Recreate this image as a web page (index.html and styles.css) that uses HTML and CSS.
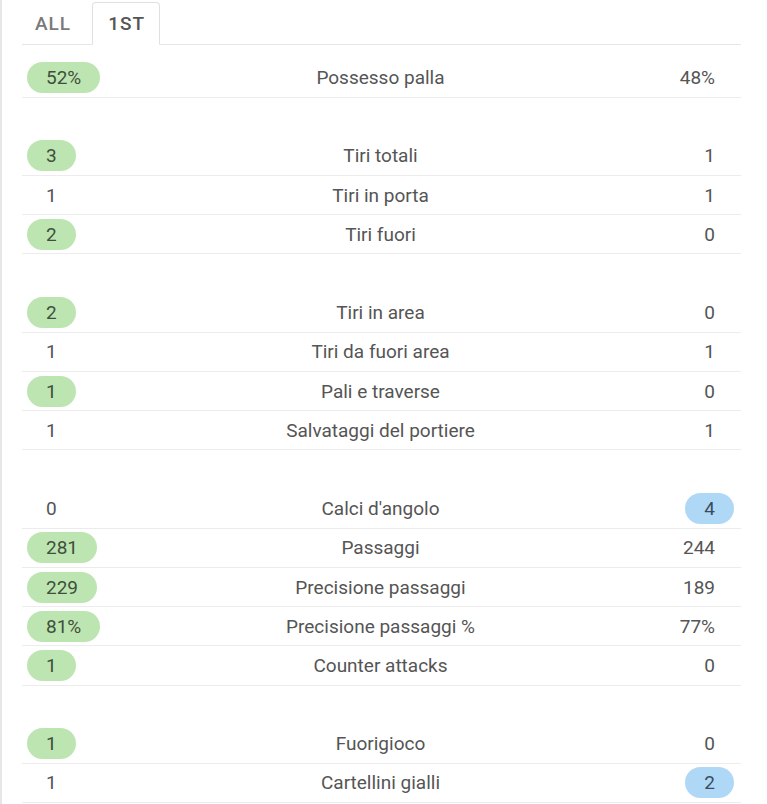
FILE: index.html
```html
<!DOCTYPE html>
<html lang="it">
<head>
<meta charset="utf-8">
<title>Statistiche</title>
<link rel="stylesheet" href="styles.css">
</head>
<body>
<div class="panel">
  <ul class="tabs">
    <li class="tab">ALL</li>
    <li class="tab active">1ST</li>
  </ul>
  <table class="stats">
    <colgroup><col class="c-side"><col class="c-mid"><col class="c-side"></colgroup>
    <tbody>
      <tr><td class="l"><span class="v win">52%</span></td><td class="m">Possesso palla</td><td class="r"><span class="v">48%</span></td></tr>
      <tr class="spacer"><td colspan="3"></td></tr>
      <tr><td class="l"><span class="v win">3</span></td><td class="m">Tiri totali</td><td class="r"><span class="v">1</span></td></tr>
      <tr><td class="l"><span class="v">1</span></td><td class="m">Tiri in porta</td><td class="r"><span class="v">1</span></td></tr>
      <tr><td class="l"><span class="v win">2</span></td><td class="m">Tiri fuori</td><td class="r"><span class="v">0</span></td></tr>
      <tr class="spacer"><td colspan="3"></td></tr>
      <tr><td class="l"><span class="v win">2</span></td><td class="m">Tiri in area</td><td class="r"><span class="v">0</span></td></tr>
      <tr><td class="l"><span class="v">1</span></td><td class="m">Tiri da fuori area</td><td class="r"><span class="v">1</span></td></tr>
      <tr><td class="l"><span class="v win">1</span></td><td class="m">Pali e traverse</td><td class="r"><span class="v">0</span></td></tr>
      <tr><td class="l"><span class="v">1</span></td><td class="m">Salvataggi del portiere</td><td class="r"><span class="v">1</span></td></tr>
      <tr class="spacer"><td colspan="3"></td></tr>
      <tr><td class="l"><span class="v">0</span></td><td class="m">Calci d'angolo</td><td class="r"><span class="v away">4</span></td></tr>
      <tr><td class="l"><span class="v win">281</span></td><td class="m">Passaggi</td><td class="r"><span class="v">244</span></td></tr>
      <tr><td class="l"><span class="v win">229</span></td><td class="m">Precisione passaggi</td><td class="r"><span class="v">189</span></td></tr>
      <tr><td class="l"><span class="v win">81%</span></td><td class="m">Precisione passaggi %</td><td class="r"><span class="v">77%</span></td></tr>
      <tr><td class="l"><span class="v win">1</span></td><td class="m">Counter attacks</td><td class="r"><span class="v">0</span></td></tr>
      <tr class="spacer"><td colspan="3"></td></tr>
      <tr><td class="l"><span class="v win">1</span></td><td class="m">Fuorigioco</td><td class="r"><span class="v">0</span></td></tr>
      <tr><td class="l"><span class="v">1</span></td><td class="m">Cartellini gialli</td><td class="r"><span class="v away">2</span></td></tr>
    </tbody>
  </table>
</div>
</body>
</html>
```

FILE: styles.css
```css
html, body {
  margin: 0;
  padding: 0;
  background: #ffffff;
}

body {
  font-family: Roboto, "Liberation Sans", Arial, sans-serif;
  color: #555555;
  overflow: hidden;
}

.panel {
  border-left: 2px solid #e6e6e6;
  height: 804px;
  padding: 2px 0 0 20px;
  box-sizing: border-box;
  width: 741px;
}

.tabs {
  list-style: none;
  margin: 0;
  padding: 0;
  display: flex;
  align-items: flex-end;
  border-bottom: 1px solid #e6e6e6;
  height: 42px;
}

.tab {
  height: 42px;
  box-sizing: border-box;
  padding: 0 13px;
  margin-right: 8px;
  display: flex;
  align-items: center;
  font-size: 19px;
  font-weight: 500;
  color: #7a7a7a;
  letter-spacing: 1px;
}

.tab.active {
  color: #555555;
  border: 1px solid #e0e0e0;
  border-bottom: 1px solid #ffffff;
  border-radius: 4px 4px 0 0;
  background: #ffffff;
  margin-bottom: -1px;
  height: 43px;
  padding: 0 14px 0 15px;
}

.stats {
  width: 100%;
  border-collapse: collapse;
  table-layout: fixed;
  margin-top: 13px;
  font-size: 19px;
}

.c-side { width: 33.33%; }
.c-mid { width: 33.34%; }

.stats td {
  height: 39.2px;
  box-sizing: border-box;
  padding: 0 7px 0 5px;
  border-bottom: 1px solid #ececec;
  white-space: nowrap;
  vertical-align: middle;
}

.stats tr.spacer td {
  border-bottom: none;
}

.l { text-align: left; }
.m { text-align: center; color: #555555; }
.r { text-align: right; }

.v {
  display: inline-block;
  height: 31px;
  line-height: 31px;
  padding: 0 19px;
  border-radius: 16px;
  vertical-align: middle;
}

.v.win {
  background: #bde5b1;
  color: #3f4f3c;
}

.v.away {
  background: #afd8f6;
  color: #3a4c60;
}
```
